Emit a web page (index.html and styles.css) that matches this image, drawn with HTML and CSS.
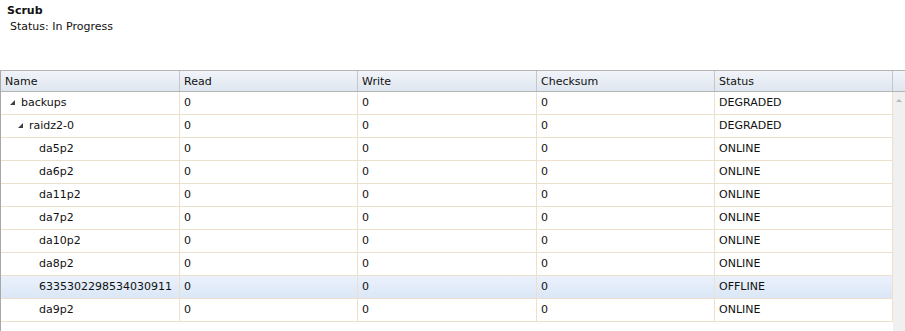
FILE: index.html
```html
<!DOCTYPE html>
<html lang="en">
<head>
    <meta charset="UTF-8">
    <title>Scrub</title>
    <link rel="stylesheet" href="styles.css">
</head>
<body>
    <div class="scrub-info">
        <h3>Scrub</h3>
        <p>Status: In Progress</p>
    </div>

    <div class="grid">
        <div class="grid-head">
            <div class="cell">Name</div>
            <div class="cell">Read</div>
            <div class="cell">Write</div>
            <div class="cell">Checksum</div>
            <div class="cell">Status</div>
            <div class="cell filler"></div>
        </div>
        <div class="grid-body">
            <div class="rows">
                <div class="row">
                    <div class="cell name lvl0"><span class="arrow"></span>backups</div>
                    <div class="cell">0</div><div class="cell">0</div><div class="cell">0</div><div class="cell">DEGRADED</div>
                </div>
                <div class="row">
                    <div class="cell name lvl1"><span class="arrow"></span>raidz2-0</div>
                    <div class="cell">0</div><div class="cell">0</div><div class="cell">0</div><div class="cell">DEGRADED</div>
                </div>
                <div class="row">
                    <div class="cell name lvl2">da5p2</div>
                    <div class="cell">0</div><div class="cell">0</div><div class="cell">0</div><div class="cell">ONLINE</div>
                </div>
                <div class="row">
                    <div class="cell name lvl2">da6p2</div>
                    <div class="cell">0</div><div class="cell">0</div><div class="cell">0</div><div class="cell">ONLINE</div>
                </div>
                <div class="row">
                    <div class="cell name lvl2">da11p2</div>
                    <div class="cell">0</div><div class="cell">0</div><div class="cell">0</div><div class="cell">ONLINE</div>
                </div>
                <div class="row">
                    <div class="cell name lvl2">da7p2</div>
                    <div class="cell">0</div><div class="cell">0</div><div class="cell">0</div><div class="cell">ONLINE</div>
                </div>
                <div class="row">
                    <div class="cell name lvl2">da10p2</div>
                    <div class="cell">0</div><div class="cell">0</div><div class="cell">0</div><div class="cell">ONLINE</div>
                </div>
                <div class="row">
                    <div class="cell name lvl2">da8p2</div>
                    <div class="cell">0</div><div class="cell">0</div><div class="cell">0</div><div class="cell">ONLINE</div>
                </div>
                <div class="row selected">
                    <div class="cell name lvl2">6335302298534030911</div>
                    <div class="cell">0</div><div class="cell">0</div><div class="cell">0</div><div class="cell">OFFLINE</div>
                </div>
                <div class="row">
                    <div class="cell name lvl2">da9p2</div>
                    <div class="cell">0</div><div class="cell">0</div><div class="cell">0</div><div class="cell">ONLINE</div>
                </div>
            </div>
            <div class="scrollbar"><span class="up"></span></div>
        </div>
    </div>
</body>
</html>
```

FILE: styles.css
```css
* {
    margin: 0;
    padding: 0;
    box-sizing: border-box;
}

body {
    font-family: 'DejaVu Sans', Verdana, sans-serif;
    font-size: 11px;
    color: #111;
    background: #fff;
}

.scrub-info {
    padding: 4px 0 0 7px;
    height: 70px;
}

.scrub-info h3 {
    font-size: 11px;
    font-weight: bold;
    line-height: 14px;
}

.scrub-info p {
    padding-left: 3px;
    margin-top: 2px;
    line-height: 14px;
}

.grid {
    border-left: 1px solid #a8a8a8;
    border-top: 1px solid #b4b4b4;
    height: 261px;
}

.grid-head,
.row {
    display: grid;
    grid-template-columns: 179px 178px 179px 178px 178px 12px;
}

.row {
    grid-template-columns: 179px 178px 179px 178px 178px;
    height: 23px;
    border-bottom: 1px solid #ede0cd;
}

.grid-head {
    height: 21px;
    background: linear-gradient(#f1f4f9, #dfe6ef);
    border-bottom: 1px solid #b4b4b4;
}

.grid-head .cell {
    border-right: 1px solid #c3c6cb;
    line-height: 18px;
    padding: 2px 0 0 4px;
}

.grid-head .filler {
    border-right: none;
}

.grid-body {
    display: flex;
}

.rows {
    width: 892px;
}

.row .cell {
    border-right: 1px solid #ede0cd;
    line-height: 22px;
    padding-left: 4px;
    white-space: nowrap;
    overflow: hidden;
}

.row.selected {
    background: linear-gradient(#eaf1fb, #dbe7f7);
}

.cell.lvl0 { padding-left: 9px; }
.cell.lvl1 { padding-left: 17px; }
.cell.lvl2 { padding-left: 38px; }

.arrow {
    display: inline-block;
    width: 0;
    height: 0;
    border-left: 5px solid transparent;
    border-bottom: 5px solid #404040;
    margin-right: 6px;
    vertical-align: 1px;
}

.scrollbar {
    width: 12px;
    height: 240px;
    background: #f0f0f0;
    position: relative;
}

.scrollbar .up {
    position: absolute;
    left: 3px;
    top: 7px;
    width: 0;
    height: 0;
    border-left: 3px solid transparent;
    border-right: 3px solid transparent;
    border-bottom: 3px solid #b8b8b8;
}
```
